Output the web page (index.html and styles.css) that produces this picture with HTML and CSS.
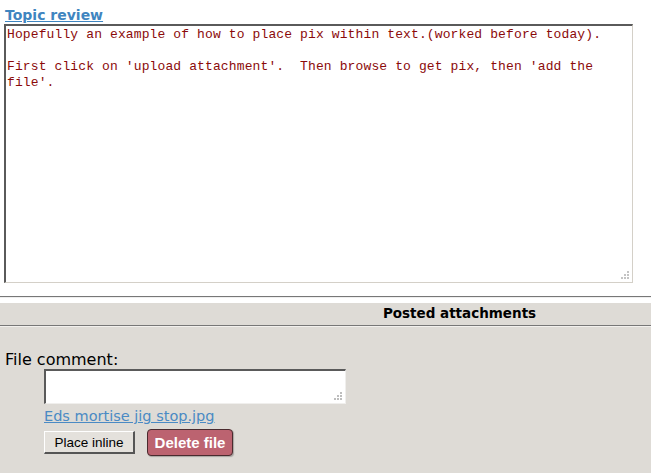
FILE: index.html
```html
<!DOCTYPE html>
<html>
<head>
<meta charset="utf-8">
<link rel="stylesheet" href="styles.css">
</head>
<body>
<div class="review">
  <a class="review-title" href="#">Topic review</a>
  <div class="area-wrap">
    <textarea class="review-text">Hopefully an example of how to place pix within text.(worked before today).

First click on 'upload attachment'.  Then browse to get pix, then 'add the file'.</textarea>
    <svg class="grip grip-big" width="8" height="8" viewBox="0 0 8 8"><rect x="6" y="0" width="2" height="2"/><rect x="3" y="3" width="2" height="2"/><rect x="6" y="3" width="2" height="2"/><rect x="0" y="6" width="2" height="2"/><rect x="3" y="6" width="2" height="2"/><rect x="6" y="6" width="2" height="2"/></svg>
  </div>
</div>
<div class="divider"></div>
<div class="attachments">
  <div class="att-header">Posted attachments</div>
  <div class="att-body">
    <div class="comment-label">File comment:</div>
    <div class="att-item">
      <div class="area-wrap">
        <textarea class="comment-box"></textarea>
        <svg class="grip grip-small" width="8" height="8" viewBox="0 0 8 8"><rect x="6" y="0" width="2" height="2"/><rect x="3" y="3" width="2" height="2"/><rect x="6" y="3" width="2" height="2"/><rect x="0" y="6" width="2" height="2"/><rect x="3" y="6" width="2" height="2"/><rect x="6" y="6" width="2" height="2"/></svg>
      </div>
      <a class="file-link" href="#">Eds mortise jig stop.jpg</a>
      <div class="buttons">
        <button class="btn-inline">Place inline</button>
        <button class="btn-delete">Delete file</button>
      </div>
    </div>
  </div>
</div>
</body>
</html>
```
FILE: styles.css
```css
html, body {
  margin: 0;
  padding: 0;
  background: #ffffff;
  height: 100%;
}
body {
  font-family: "DejaVu Sans", Verdana, sans-serif;
  display: flex;
  flex-direction: column;
}
.review {
  padding: 6px 4px 0 4px;
  display: flex;
  flex-direction: column;
  align-items: flex-start;
}
.review-title {
  font-size: 14px;
  font-weight: bold;
  color: #3f85c0;
  text-decoration: underline;
  margin-left: 1px;
  line-height: 18px;
}
.area-wrap {
  position: relative;
  display: flex;
}
.grip {
  position: absolute;
  right: 4px;
  bottom: 4px;
  fill: #c4c4c4;
  pointer-events: none;
}
.grip-small {
  fill: #bdbdbd;
}
.review-text {
  box-sizing: border-box;
  width: 629px;
  height: 259px;
  margin: 0;
  padding: 1px 2px 1px 1px;
  border-style: solid;
  border-width: 2px 1px 1px 2px;
  border-color: #5a5a5a #d4d0c8 #d4d0c8 #5a5a5a;
  font-family: "Liberation Mono", "Courier New", monospace;
  font-size: 13px;
  letter-spacing: 0.12px;
  line-height: 16px;
  color: #8b0a0a;
  background: #fff;
  resize: none;
  outline: none;
}
.divider {
  margin-top: 13px;
  height: 1px;
  background: #777;
  border-bottom: 1px solid #eee;
}
.attachments {
  margin-top: 5px;
  background: #dedbd6;
  flex: 1;
}
.att-header {
  font-size: 13.5px;
  font-weight: bold;
  color: #000;
  text-align: center;
  padding: 2px 0 0 268px;
  height: 20px;
  border-bottom: 1px solid #777;
  box-shadow: 0 1px 0 #f2f0ed;
}
.att-body {
  padding: 24px 0 0 5px;
}
.comment-label {
  font-size: 16px;
  line-height: 19px;
  color: #000;
}
.att-item {
  padding-left: 39px;
  display: flex;
  flex-direction: column;
  align-items: flex-start;
}
.comment-box {
  box-sizing: border-box;
  width: 302px;
  height: 35px;
  margin: 0;
  border-style: solid;
  border-width: 2px 1px 1px 2px;
  border-color: #5a5a5a #f0efed #f0efed #5a5a5a;
  background: #fff;
  resize: none;
  outline: none;
}
.file-link {
  font-size: 14.5px;
  line-height: 20px;
  margin-top: 2px;
  color: #4a8ac4;
  text-decoration: underline;
}
.buttons {
  display: flex;
  align-items: center;
  gap: 12px;
  margin-top: 3px;
}
.btn-inline {
  font-family: "Liberation Sans", Arial, sans-serif;
  font-size: 13.5px;
  color: #000;
  background: #e4e1dc;
  width: 91px;
  height: 23px;
  padding: 0;
  border-style: solid;
  border-width: 1px 2px 2px 1px;
  border-color: #fff #555 #555 #fff;
}
.btn-delete {
  font-family: "Liberation Sans", Arial, sans-serif;
  font-size: 15px;
  font-weight: bold;
  color: #fff;
  background: #bc6370;
  width: 86px;
  height: 27px;
  padding: 0;
  border: 1px solid #4a2a2e;
  border-radius: 4px;
  box-shadow: 1px 1px 1px rgba(0,0,0,0.25);
}
```
